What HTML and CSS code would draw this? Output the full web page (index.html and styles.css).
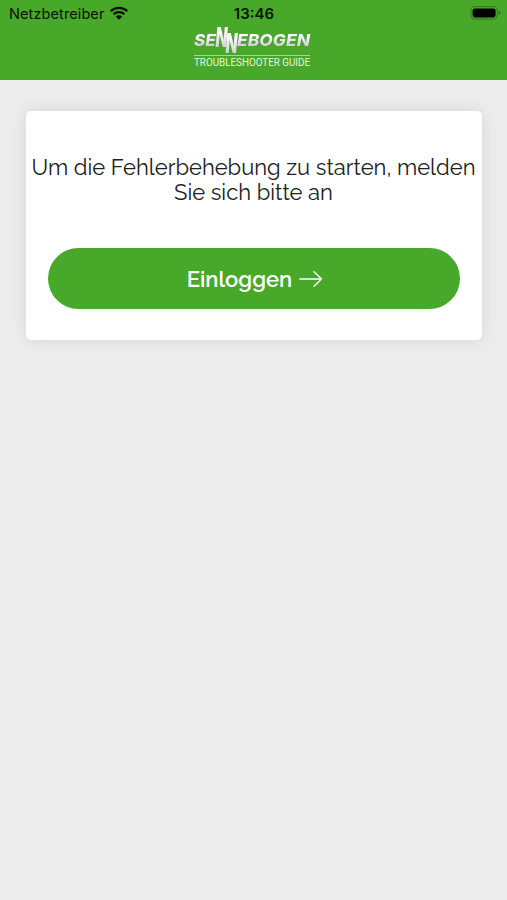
FILE: index.html
```html
<!DOCTYPE html>
<html lang="de">
    <head>
        <meta charset="UTF-8">
        <title>Troubleshooter Guide</title>
        <link rel="stylesheet" href="styles.css">
    </head>
    <body>
        <header class="header">
            <div class="status-bar">
                <div class="carrier">
                    <span class="carrier-name">Netzbetreiber</span>
                    <svg class="wifi" width="20" height="14" viewBox="0 0 20 14">
                        <path d="M1.7 5.2C6.3 .8 13.7 .8 18.3 5.2M4.6 8.2C7.6 5.4 12.4 5.4 15.4 8.2" fill="none" stroke="#071405" stroke-width="2.3"/>
                        <path d="M10 13.8L6.7 10.5Q10 7.9 13.3 10.5Z" fill="#071405"/>
                    </svg>
                </div>
                <span class="time">13:46</span>
                <svg class="battery" width="31" height="14" viewBox="0 0 31 14">
                    <rect x=".9" y=".6" width="26.4" height="12.6" rx="4" fill="none" stroke="#2f7c1a" stroke-width="1"/>
                    <rect x="2.6" y="2.4" width="23" height="9" rx="2.3" fill="#000"/>
                    <path d="M28.6 4.8Q30.4 5.4 30.4 6.9Q30.4 8.4 28.6 9Z" fill="#2f7c1a"/>
                </svg>
            </div>
            <svg class="logo" width="120" height="48" viewBox="0 0 120 48">
                <defs>
                    <linearGradient id="silver" x1="0" y1="0" x2="0" y2="1">
                        <stop offset="0.25" stop-color="#fff"/>
                        <stop offset="0.8" stop-color="#cfd3cf"/>
                    </linearGradient>
                </defs>
                <g class="logo-name" fill="url(#silver)">
                    <text x="1" y="21.5" textLength="22" lengthAdjust="spacingAndGlyphs">SE</text>
                    <text class="logo-n" x="22.5" y="23" textLength="12" lengthAdjust="spacingAndGlyphs">N</text>
                    <text class="logo-n" x="32.5" y="29" textLength="12" lengthAdjust="spacingAndGlyphs">N</text>
                    <text x="44" y="21.5" textLength="73" lengthAdjust="spacingAndGlyphs">EBOGEN</text>
                </g>
                <path d="M1 31.5H117" stroke="#a5d694" stroke-width="1"/>
                <text class="logo-sub" x="1" y="42" textLength="116" lengthAdjust="spacingAndGlyphs">TROUBLESHOOTER GUIDE</text>
            </svg>
        </header>
        <main class="card">
            <p class="message">Um die Fehlerbehebung zu starten, melden<br>Sie sich bitte an</p>
            <button class="login-button">
                <span class="login-text">Einloggen</span>
                <svg class="arrow" width="24" height="18" viewBox="0 0 24 18">
                    <path d="M.8 9H22.5M15 1.7L22.5 9L15 16.3" fill="none" stroke="#fff" stroke-width="1.4" stroke-linecap="round" stroke-linejoin="round"/>
                </svg>
            </button>
        </main>
    </body>
</html>
```

FILE: styles.css
```css
* {
    box-sizing: border-box;
}
body {
    margin: 0;
    min-height: 900px;
    background: #ededed;
    font-family: Raleway, Lato, sans-serif;
}
.header {
    height: 80px;
    background: #48a829;
    text-align: center;
}
.status-bar {
    display: grid;
    grid-template-columns: 1fr auto 1fr;
    align-items: center;
    height: 26px;
    padding: 0 6px 0 7px;
    font-family: Inter, sans-serif;
    font-size: 14.5px;
    color: #071405;
}
.carrier {
    display: flex;
    align-items: center;
    gap: 5px;
    padding-left: 2px;
}
.carrier-name {
    letter-spacing: 0.1px;
}
.time {
    font-size: 15px;
    font-weight: 600;
}
.battery {
    justify-self: end;
}
.logo {
    display: block;
    margin: -2px 0 0 193px;
    overflow: visible;
}
.logo-name {
    font-family: Inter, sans-serif;
    font-size: 16.5px;
    font-weight: 800;
    font-style: italic;
    filter: drop-shadow(0.5px 0.8px 0.4px #315d27);
}
.logo-n {
    font-size: 27px;
    font-weight: 900;
}
.logo-sub {
    font-family: Roboto, sans-serif;
    font-size: 11px;
    fill: #e6f6df;
}
.card {
    width: 456px;
    height: 229px;
    margin: 30.5px auto 0 26px;
    padding: 44px 0 0;
    background: #fff;
    border-radius: 5px;
    box-shadow: 0 0 18px rgba(0, 0, 0, 0.1);
}
.message {
    margin: 0 1px 0 0;
    font-size: 22px;
    line-height: 25.5px;
    text-align: center;
    white-space: nowrap;
    color: #202020;
}
.login-button {
    display: flex;
    align-items: center;
    justify-content: center;
    gap: 7px;
    width: 412px;
    height: 61px;
    margin: 42.5px auto 0;
    padding: 0 0 0 2px;
    border: 0;
    border-radius: 31px;
    background: #48a829;
    color: #fff;
    font-family: inherit;
}
.login-text {
    font-size: 22px;
    font-weight: 600;
}
```
